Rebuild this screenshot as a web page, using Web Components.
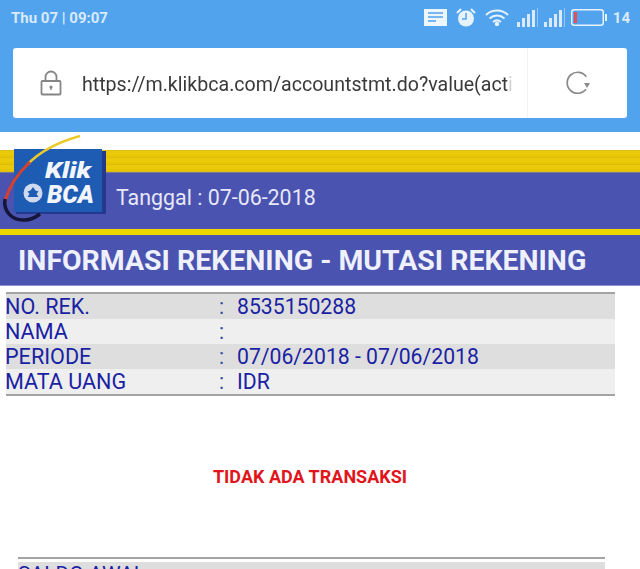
<!DOCTYPE html>
<html>
<head>
<meta charset="utf-8">
<style>
  html, body { margin: 0; height: 569px; overflow: hidden; background: #fff; font-family: Roboto, sans-serif; }
</style>
</head>
<body>
<browser-chrome url="https://m.klikbca.com/accountstmt.do?value(actionForm)=1"></browser-chrome>
<bca-banner date="Tanggal : 07-06-2018"></bca-banner>
<section-title>INFORMASI REKENING - MUTASI REKENING</section-title>
<account-info></account-info>
<empty-note>TIDAK ADA TRANSAKSI</empty-note>
<balance-table></balance-table>

<script>
class BrowserChrome extends HTMLElement {
  constructor() {
    super();
    this.attachShadow({ mode: 'open' });
  }
  connectedCallback() {
    this.shadowRoot.innerHTML = `
      <style>
        :host { display: block; height: 132px; background: #52a3ee; box-sizing: border-box; padding: 0 13px; }
        .status { height: 48px; display: flex; align-items: center; justify-content: space-between; margin: 0 -3px 0 -2px; padding-bottom: 13px; box-sizing: border-box; color: #d8eafb; font-size: 15px; font-weight: 700; }
        .icons { display: flex; align-items: center; gap: 9px; }
        .icons svg { display: block; }
        .bar { height: 70px; background: #fff; border-radius: 3px; display: flex; align-items: center; }
        .lock { width: 69px; display: flex; justify-content: center; padding-left: 6px; box-sizing: border-box; }
        .url { flex: 1; min-width: 0; overflow: hidden; white-space: nowrap; font-size: 19.600px; color: #3a3a3a; margin-top: 2px; -webkit-mask-image: linear-gradient(90deg, #000 calc(100% - 6px), transparent); mask-image: linear-gradient(90deg, #000 calc(100% - 6px), transparent); }
        .reload { width: 100px; height: 70px; border-left: 1px solid #f2f2f2; display: flex; align-items: center; justify-content: center; margin-left: 15px; box-sizing: border-box; }
      </style>
      <div class="status">
        <span>Thu 07 | 09:07</span>
        <div class="icons">
          <svg width="23" height="17" viewBox="0 0 23 17"><rect width="23" height="17" fill="#eef6fd"/><path d="M4 4h15M4 8h15M4 12h8" stroke="#52a3ee" stroke-width="1.6"/></svg>
          <svg width="20" height="19" viewBox="0 0 20 19"><circle cx="10" cy="10.5" r="8" fill="#e6f2fc"/><path d="M10 5v6h-4" stroke="#52a3ee" stroke-width="1.5" fill="none"/><path d="M1 5l4-4M19 5l-4-4" stroke="#e6f2fc" stroke-width="2"/></svg>
          <svg width="24" height="17" viewBox="0 0 24 17" fill="none" stroke="#e6f2fc" stroke-width="2"><path d="M1 6c6-6 16-6 22 0"/><path d="M4.500 9.500c4.500-4 10.500-4 15 0"/><path d="M8 13c2.500-2 5.500-2 8 0"/><circle cx="12" cy="15" r="1.200" fill="#e6f2fc"/></svg>
          <svg width="21" height="19" viewBox="0 0 21 19" fill="#d8eafb" style="margin-left:-1px"><rect x="0" y="14" width="3" height="5"/><rect x="5" y="10" width="3" height="9"/><rect x="10" y="6" width="3" height="13"/><rect x="15" y="2" width="3" height="17"/><rect x="20" y="0" width="1" height="19" opacity=".5"/></svg>
          <svg width="21" height="19" viewBox="0 0 21 19" fill="#d8eafb" style="margin-left:-3px"><rect x="0" y="14" width="3" height="5"/><rect x="5" y="10" width="3" height="9"/><rect x="10" y="6" width="3" height="13"/><rect x="15" y="2" width="3" height="17"/><rect x="20" y="0" width="1" height="19" opacity=".5"/></svg>
          <svg width="36" height="17" viewBox="0 0 36 17" style="margin-left:-3px"><rect x=".75" y=".75" width="31.500" height="15.500" rx="2.500" fill="none" stroke="#e6f2fc" stroke-width="1.500"/><rect x="3" y="3" width="3" height="11" fill="#e0505a"/><rect x="34" y="5" width="2" height="7" fill="#e6f2fc"/></svg>
          <span style="margin-left:-3px;font-size:15px">14</span>
        </div>
      </div>
      <div class="bar">
        <div class="lock">
          <svg width="22" height="26" viewBox="0 0 22 26" fill="none" stroke="#858585" stroke-width="1.800"><path d="M5.500 11V7a5.500 5.500 0 0 1 11 0v4"/><rect x="1.500" y="11" width="19" height="13.500" rx="1"/><circle cx="11" cy="17" r="1.600" fill="#858585" stroke="none"/><path d="M11 17v3" stroke-width="1.400"/></svg>
        </div>
        <div class="url">${this.getAttribute('url')}</div>
        <div class="reload">
          <svg width="26" height="26" viewBox="0 0 26 26" fill="none"><path d="M22.500 16.500A10.500 10.500 0 1 1 19 4.500" stroke="#8a8a8a" stroke-width="1.700" transform="rotate(18 13 13)"/><path d="M19 13h6l-3 5z" fill="#8a8a8a"/></svg>
        </div>
      </div>`;
  }
}

class BcaBanner extends HTMLElement {
  constructor() {
    super();
    this.attachShadow({ mode: 'open' });
  }
  connectedCallback() {
    this.shadowRoot.innerHTML = `
      <style>
        :host { display: block; position: relative; margin-top: 18px; }
        .stripes { height: 22px; background: repeating-linear-gradient(#dcbc14 0 1px, #e9cb0c 1px 5px, #e6c600 5px 7px); }
        .date { height: 57px; box-sizing: border-box; padding: 0 0 7px 116px; background: #4a53b0; color: #e8e8f8; font-size: 21.400px; display: flex; align-items: center; border-top: 1px solid #7b7a8e; }
        .rule { height: 6px; background: #eed800; }
        .logo { position: absolute; left: 0; top: -15px; }
        .logo text { font-family: Roboto, sans-serif; font-weight: 900; font-style: italic; fill: #f2f5fb; }
      </style>
      <div class="stripes"></div>
      <div class="date">${this.getAttribute('date')}</div>
      <div class="rule"></div>
      <svg class="logo" width="112" height="95" viewBox="0 0 112 95">
        <rect x="16" y="16" width="90" height="63" fill="#24398e"/>
        <rect x="14" y="14" width="88" height="63" fill="#1e5cb4"/>
        <path d="M80 1C55 8 38 18 27 30" stroke="#ecc82a" stroke-width="2.500" fill="none"/>
        <path d="M30 27C18 38 9 52 5 66" stroke="#d8402c" stroke-width="3" fill="none"/>
        <path d="M5 64C3 76 12 86 25 85c6 0 11-3 15-6" stroke="#15153a" stroke-width="3.500" fill="none"/>
        <text x="45" y="43" font-size="22" textLength="46" lengthAdjust="spacingAndGlyphs">Klik</text>
        <text x="47" y="68" font-size="25" textLength="47" lengthAdjust="spacingAndGlyphs">BCA</text>
        <circle cx="33" cy="58" r="9.500" fill="#cfdaf0"/>
        <path d="M33 52l2.500 3.500 3 1-2 2.500 2 3h-11l2-3-2-2.500 3-1z" fill="#1e5cb4"/>
      </svg>`;
  }
}

class SectionTitle extends HTMLElement {
  constructor() {
    super();
    this.attachShadow({ mode: 'open' });
    this.shadowRoot.innerHTML = `
      <style>
        :host { display: block; height: 51px; box-sizing: border-box; background: #4a53b0; color: #eef0fb; font-size: 28.450px; font-weight: 700; padding: 9px 0 0 18px; line-height: 34px; white-space: nowrap; border-bottom: 1px solid #8b90d0; }
      </style>
      <slot></slot>`;
  }
}

class AccountInfo extends HTMLElement {
  constructor() {
    super();
    this.attachShadow({ mode: 'open' });
  }
  connectedCallback() {
    const rows = [
      ['NO. REK.', '8535150288'],
      ['NAMA', ''],
      ['PERIODE', '07/06/2018 - 07/06/2018'],
      ['MATA UANG', 'IDR']
    ];
    this.shadowRoot.innerHTML = `
      <style>
        :host { display: block; width: 609px; margin: 6px 0 0 6px; border-top: 2px solid #a4a4a4; border-bottom: 2px solid #a4a4a4; color: #1a22a4; font-size: 21.200px; }
        .row { display: grid; grid-template-columns: 213px 18px 1fr; height: 25px; line-height: 25px; background: #dedede; white-space: nowrap; }
        .row:nth-of-type(even) { background: #efefef; }
        .label { font-size: 21.600px; margin-left: -1px; }
        .sep { color: #3b4a9c; }
      </style>
      ${rows.map(r => `
        <div class="row"><span class="label">${r[0]}</span><span class="sep">:</span><span>${r[1]}</span></div>
      `).join('')}`;
  }
}

class EmptyNote extends HTMLElement {
  constructor() {
    super();
    this.attachShadow({ mode: 'open' });
    this.shadowRoot.innerHTML = `
      <style>
        :host { display: block; width: 620px; margin-top: 70px; text-align: center; color: #e0161c; font-size: 18px; font-weight: 700; line-height: 22px; }
      </style>
      <slot></slot>`;
  }
}

class BalanceTable extends HTMLElement {
  constructor() {
    super();
    this.attachShadow({ mode: 'open' });
    this.shadowRoot.innerHTML = `
      <style>
        :host { display: block; width: 587px; margin: 69px 0 0 18px; border-top: 2px solid #a4a4a4; padding-top: 3px; color: #1a22a4; font-size: 21px; }
        .row { background: #dedede; height: 25px; line-height: 25px; }
      </style>
      <div class="row">SALDO AWAL</div>`;
  }
}

customElements.define('browser-chrome', BrowserChrome);
customElements.define('bca-banner', BcaBanner);
customElements.define('section-title', SectionTitle);
customElements.define('account-info', AccountInfo);
customElements.define('empty-note', EmptyNote);
customElements.define('balance-table', BalanceTable);
</script>
</body>
</html>
